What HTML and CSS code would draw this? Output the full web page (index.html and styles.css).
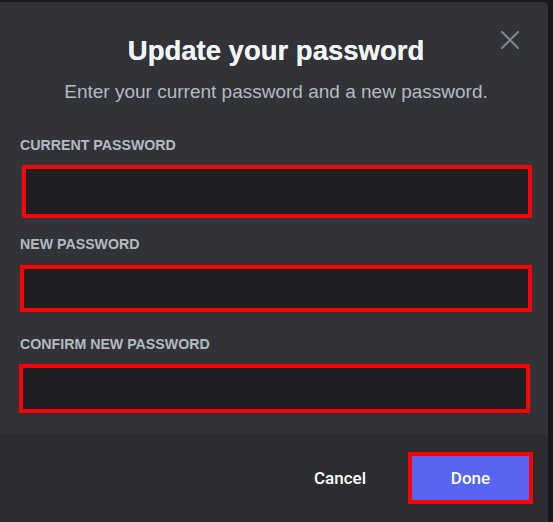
FILE: index.html
```html
<!DOCTYPE html>
<html lang="en">
<head>
<meta charset="utf-8">
<title>Update your password</title>
<link rel="stylesheet" href="styles.css">
</head>
<body>
<div class="modal" role="dialog" aria-labelledby="modal-title">
  <button class="close" type="button" aria-label="Close">
    <svg viewBox="0 0 20 20" width="20" height="20" aria-hidden="true">
      <path d="M2 2 L18 18 M18 2 L2 18" />
    </svg>
  </button>
  <div class="body">
    <h1 class="title" id="modal-title">Update your password</h1>
    <p class="subtitle">Enter your current password and a new password.</p>
    <div class="field field-current">
      <label class="label" for="pw-current">Current Password</label>
      <input class="input" id="pw-current" type="password">
    </div>
    <div class="field field-new">
      <label class="label" for="pw-new">New Password</label>
      <input class="input" id="pw-new" type="password">
    </div>
    <div class="field field-confirm">
      <label class="label" for="pw-confirm">Confirm New Password</label>
      <input class="input" id="pw-confirm" type="password">
    </div>
  </div>
  <div class="footer">
    <button class="btn btn-link" type="button">Cancel</button>
    <button class="btn btn-primary" type="button">Done</button>
  </div>
</div>
</body>
</html>
```

FILE: styles.css
```css
html, body {
  margin: 0;
  padding: 0;
  height: 100%;
  overflow: hidden;
}

body {
  background: #18191c;
  font-family: "Liberation Sans", Arial, sans-serif;
}

.modal {
  position: relative;
  width: 548px;
  margin-top: 2px;
  background: #313338;
  border-radius: 0 5px 0 0;
  overflow: hidden;
}

.close {
  position: absolute;
  top: 28px;
  right: 28px;
  width: 20px;
  height: 20px;
  padding: 0;
  border: 0;
  background: none;
  cursor: pointer;
}

.close svg {
  display: block;
  fill: none;
  stroke: #80848e;
  stroke-width: 2.2;
  stroke-linecap: round;
}

.body {
  padding: 32px 16px 21px 20px;
}

.title {
  margin: 0;
  font-size: 27.5px;
  line-height: 34px;
  font-weight: 700;
  color: #f2f3f5;
  text-align: center;
  text-shadow: 0 0 0.4px #f2f3f5;
}

.subtitle {
  margin: 12px 0 0;
  font-size: 19px;
  line-height: 24px;
  color: #b5bac1;
  text-align: center;
}

.field {
  display: flex;
  flex-direction: column;
  align-items: flex-start;
}

.label {
  display: block;
  font-size: 14.2px;
  line-height: 20px;
  font-weight: 700;
  text-transform: uppercase;
  color: #b5bac1;
}

.input {
  display: block;
  box-sizing: border-box;
  margin: 10px 0 0;
  padding: 0 12px;
  border: 4px solid #ff0000;
  border-radius: 0;
  background: #1e1f22;
  color: #dbdee1;
  font: inherit;
  outline: none;
  -webkit-appearance: none;
  appearance: none;
}

.field-current {
  margin-top: 31px;
}

.field-current .input {
  margin-left: 2px;
  width: 510px;
  height: 53px;
}

.field-new {
  margin-top: 16px;
}

.field-new .input {
  margin-top: 11px;
  width: 512px;
  height: 47px;
}

.field-confirm {
  margin-top: 22px;
}

.field-confirm .input {
  margin-left: -1px;
  width: 511px;
  height: 49px;
}

.footer {
  display: flex;
  justify-content: flex-end;
  align-items: center;
  padding: 18px 15px 24px 16px;
  background: #2b2d31;
}

.btn {
  font-family: Roboto, "Liberation Sans", sans-serif;
  font-size: 17px;
  font-weight: 500;
  line-height: 20px;
  border: 0;
  cursor: pointer;
}

.btn-link {
  padding: 0 20px;
  margin-right: 22px;
  height: 52px;
  background: none;
  color: #ffffff;
}

.btn-primary {
  box-sizing: border-box;
  width: 125px;
  height: 52px;
  border: 4px solid #ff0000;
  background: #5865f2;
  color: #ffffff;
}
```
